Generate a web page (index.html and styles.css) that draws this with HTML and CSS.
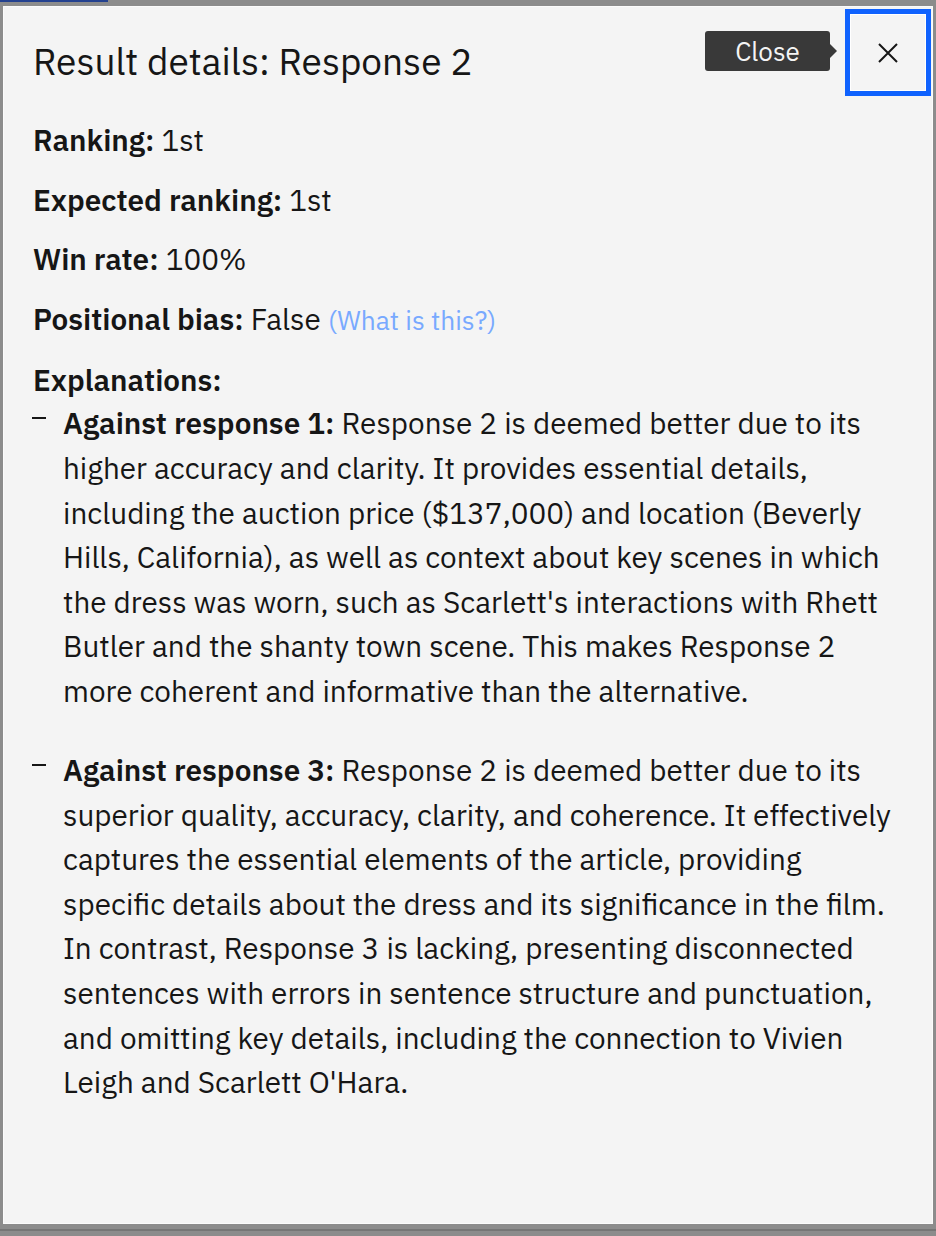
FILE: index.html
```html
<!DOCTYPE html>
<html lang="en">
<head>
<meta charset="utf-8">
<title>Result details: Response 2</title>
<link rel="stylesheet" href="styles.css">
</head>
<body>
<div class="page">
  <div class="backdrop-top"><span class="backdrop-line"></span></div>
  <div class="modal" role="dialog" aria-label="Result details: Response 2">
    <header class="modal-header">
      <h2 class="modal-title">Result details: Response 2</h2>
      <span class="tooltip">Close</span>
      <button class="close-btn" aria-label="Close">
        <svg width="20" height="20" viewBox="0 0 20 20" aria-hidden="true">
          <path d="M1 1 L19 19 M19 1 L1 19" stroke="#161616" stroke-width="2" fill="none"/>
        </svg>
      </button>
    </header>
    <div class="modal-body">
      <p class="field"><strong>Ranking:</strong> 1st</p>
      <p class="field"><strong>Expected ranking:</strong> 1st</p>
      <p class="field"><strong>Win rate:</strong> 100%</p>
      <p class="field"><strong>Positional bias:</strong> False <a class="link" href="#">(What is this?)</a></p>
      <p class="field label"><strong>Explanations:</strong></p>
      <ul class="explanations">
        <li><span class="item-text"><strong>Against response 1:</strong> Response 2 is deemed better due to its higher accuracy and clarity. It provides essential details, including the auction price ($137,000) and location (Beverly Hills, California), as well as context about key scenes in which the dress was worn, such as Scarlett's interactions with Rhett Butler and the shanty town scene. This makes Response 2 more coherent and informative than the alternative.</span></li>
        <li><span class="item-text"><strong>Against response 3:</strong> Response 2 is deemed better due to its superior quality, accuracy, clarity, and coherence. It effectively captures the essential elements of the article, providing specific details about the dress and its significance in the film. In contrast, Response 3 is lacking, presenting disconnected sentences with errors in sentence structure and punctuation, and omitting key details, including the connection to Vivien Leigh and Scarlett O'Hara.</span></li>
      </ul>
    </div>
  </div>
  <div class="backdrop-bottom"></div>
</div>
</body>
</html>
```

FILE: styles.css
```css
* { box-sizing: border-box; }

html, body {
  margin: 0;
  padding: 0;
  background: #8c8c8c;
}

.page {
  width: 936px;
  height: 1236px;
  overflow: hidden;
  background: #8c8c8c;
  font-family: "IBM Plex Sans", Inter, "Noto Sans", sans-serif;
  color: #161616;
}

.backdrop-top {
  height: 6px;
}

.backdrop-line {
  display: block;
  width: 108px;
  height: 2px;
  background: #23418f;
}

.modal {
  position: relative;
  margin-left: 3px;
  width: 930px;
  height: 1218px;
  background: #f4f4f4;
  border: 1px solid #fbfbfb;
}

.modal-header {
  padding: 28px 120px 0 29px;
}

.modal-title {
  margin: 0;
  font-size: 37px;
  line-height: 52px;
  font-weight: 400;
  color: #161616;
}

.tooltip {
  position: absolute;
  left: 701px;
  top: 24px;
  width: 125px;
  height: 40px;
  border-radius: 3px;
  background: #393939;
  color: #f4f4f4;
  font-size: 26px;
  line-height: 40px;
  text-align: center;
}

.tooltip::after {
  content: "";
  position: absolute;
  right: -7px;
  top: 13px;
  border-left: 7px solid #393939;
  border-top: 7px solid transparent;
  border-bottom: 7px solid transparent;
}

.close-btn {
  position: absolute;
  top: 2px;
  right: 1px;
  width: 86px;
  height: 87px;
  padding: 0;
  margin: 0;
  border: 5px solid #0f62fe;
  box-shadow: inset 0 0 0 1px #ffffff;
  background: #f4f4f4;
  display: flex;
  align-items: center;
  justify-content: center;
  cursor: pointer;
}

.modal-body {
  padding: 31px 28px 0 29px;
  font-size: 29.7px;
  line-height: 44.6px;
}

.field {
  margin: 0 0 15.1px;
}

.field.label {
  margin-bottom: 0;
}

strong {
  font-weight: 600;
}

.link {
  color: #78a9ff;
  text-decoration: none;
  font-size: 26.4px;
}

.explanations {
  list-style: none;
  margin: -1px 0 0;
  padding: 0;
}

.explanations li {
  position: relative;
  padding-left: 30px;
  margin-bottom: 34.5px;
}

.explanations li::before {
  content: "";
  position: absolute;
  left: -1px;
  top: 16px;
  width: 14px;
  height: 2px;
  background: #161616;
}

.backdrop-bottom {
  margin-top: 5px;
  height: 2px;
  background: #767676;
}
```
